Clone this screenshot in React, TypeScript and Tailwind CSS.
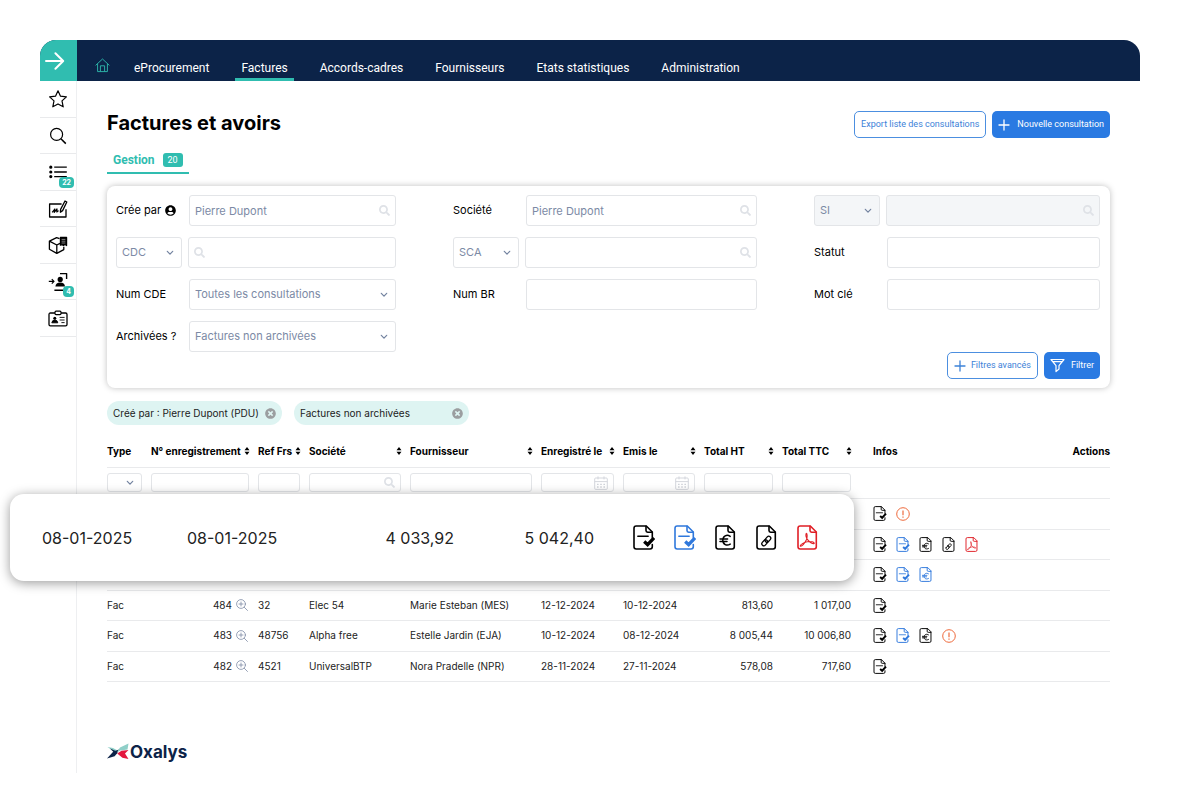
import type { ReactNode } from 'react';
import clsx from 'clsx';
import { FaSearch, FaTimesCircle, FaUserCircle } from 'react-icons/fa';

type DocKind = 'check' | 'euro' | 'link' | 'pdf';
type Info = { kind: DocKind | 'alert'; tone?: 'black' | 'blue' | 'red' | 'orange' };

interface Invoice {
  id: string;
  type?: string;
  ref?: string;
  company?: string;
  supplier?: string;
  registered?: string;
  issued?: string;
  net?: string;
  gross?: string;
  infos: Info[];
}

const invoices: Invoice[] = [
  { id: '487', infos: [{ kind: 'check' }, { kind: 'alert', tone: 'orange' }] },
  {
    id: '486',
    infos: [{ kind: 'check' }, { kind: 'check', tone: 'blue' }, { kind: 'euro' }, { kind: 'link' }, { kind: 'pdf', tone: 'red' }],
  },
  { id: '485', infos: [{ kind: 'check' }, { kind: 'check', tone: 'blue' }, { kind: 'euro', tone: 'blue' }] },
  {
    id: '484', type: 'Fac', ref: '32', company: 'Elec 54', supplier: 'Marie Esteban (MES)',
    registered: '12-12-2024', issued: '10-12-2024', net: '813,60', gross: '1 017,00',
    infos: [{ kind: 'check' }],
  },
  {
    id: '483', type: 'Fac', ref: '48756', company: 'Alpha free', supplier: 'Estelle Jardin (EJA)',
    registered: '10-12-2024', issued: '08-12-2024', net: '8 005,44', gross: '10 006,80',
    infos: [{ kind: 'check' }, { kind: 'check', tone: 'blue' }, { kind: 'euro' }, { kind: 'alert', tone: 'orange' }],
  },
  {
    id: '482', type: 'Fac', ref: '4521', company: 'UniversalBTP', supplier: 'Nora Pradelle (NPR)',
    registered: '28-11-2024', issued: '27-11-2024', net: '578,08', gross: '717,60',
    infos: [{ kind: 'check' }],
  },
];

const navItems = ['eProcurement', 'Factures', 'Accords-cadres', 'Fournisseurs', 'Etats statistiques', 'Administration'];

const toneClass = {
  black: 'text-black',
  blue: 'text-[#2f78dc]',
  red: 'text-[#e01f26]',
  orange: 'text-[#ee6a3c]',
};

/* ---------- icons ---------- */

function DocIcon({ kind, className }: { kind: DocKind; className?: string }) {
  return (
    <svg viewBox="0 0 22 25" fill="none" stroke="currentColor" strokeWidth="1.6" strokeLinejoin="round" strokeLinecap="round" className={className}>
      {kind === 'check' ? (
        <>
          <path d="M19.3 12.5V7L13.3 1H3.2Q1 1 1 3.2V21.8Q1 24 3.2 24H17Q19.3 24 19.3 21.8V19.5" />
          <path d="M4.8 11.3H15.2" strokeWidth="1.4" />
          <path d="M11.2 16.6L14.6 19.6L21 12.8" strokeWidth="3.3" strokeLinecap="butt" strokeLinejoin="miter" />
        </>
      ) : (
        <path d="M13.3 1H3.2Q1 1 1 3.2V21.8Q1 24 3.2 24H17.1Q19.3 24 19.3 21.8V7Z" />
      )}
      <path d="M13 1.2V5.6Q13 7.2 14.6 7.2H19.2" />
      {kind === 'euro' && (
        <path d="M15.2 11.4C11.8 9 7.8 11 7.8 15.2S11.8 21.3 15.2 19.1M5 13.9H12.6M5 16.4H12" strokeWidth="1.5" />
      )}
      {kind === 'link' && (
        <g transform="rotate(-48 10.3 16)" strokeWidth="1.3">
          <rect x="4.6" y="14" width="6.6" height="4" rx="2" />
          <rect x="9.4" y="14" width="6.6" height="4" rx="2" />
        </g>
      )}
      {kind === 'pdf' && (
        <path
          d="M9.2 8.4C8.4 10.4 9.6 13.4 11.2 15.4C12.8 17.4 15.8 19.2 17.2 18.5C17.6 17 13.2 16.1 10 16.8C6.8 17.4 3.2 19.6 3.2 21C4.8 22 8.2 17.5 9.4 14.8C10.3 12.6 10.6 8.6 9.2 8.4Z"
          strokeWidth="1.1"
        />
      )}
    </svg>
  );
}

function InfoIcon({ kind, tone = 'black' }: Info) {
  if (kind === 'alert') {
    return (
      <svg viewBox="0 0 14 14" fill="none" stroke="currentColor" className={clsx('size-[14px]', toneClass[tone])}>
        <circle cx="7" cy="7" r="6.3" />
        <path d="M7 3.4V8.2M7 9.6V10.8" strokeWidth="1.2" />
      </svg>
    );
  }
  return <DocIcon kind={kind} className={clsx('h-[15px] w-[14px]', toneClass[tone])} />;
}

function Chevron({ className }: { className?: string }) {
  return (
    <svg viewBox="0 0 8 6" fill="none" stroke="#7383a0" strokeWidth="1.2" strokeLinecap="round" strokeLinejoin="round" className={clsx('h-[6px] w-2', className)}>
      <path d="M1.3 1.3L4 4.2L6.7 1.3" />
    </svg>
  );
}

function SortIcon() {
  return (
    <svg viewBox="0 0 6 8" fill="currentColor" className="h-2 w-[6px]">
      <path d="M3 0L5.5 3.2H0.5ZM3 8L5.5 4.8H0.5Z" />
    </svg>
  );
}

function PlusIcon() {
  return (
    <svg viewBox="0 0 12 12" fill="none" stroke="currentColor" strokeWidth="1.3" strokeLinecap="round" className="size-3">
      <path d="M6 1V11M1 6H11" />
    </svg>
  );
}

function CalendarIcon({ className }: { className?: string }) {
  return (
    <svg viewBox="0 0 14 14" fill="none" stroke="#d0d3d9" strokeWidth="0.9" className={clsx('size-[14px]', className)}>
      <rect x="0.7" y="2" width="12.6" height="11.4" rx="1" />
      <path d="M0.7 5.6H13.3M4 0.4V3.4M10 0.4V3.4" />
      <path d="M3 8.4H4.6M6.2 8.4H7.8M9.4 8.4H11M3 11H4.6M6.2 11H7.8M9.4 11H11" strokeWidth="1.4" />
    </svg>
  );
}

function ZoomIcon() {
  return (
    <svg viewBox="0 0 12 12" fill="none" stroke="#7d8aa5" strokeWidth="0.8" strokeLinecap="round" className="size-3">
      <circle cx="5" cy="5" r="4.4" />
      <path d="M5 3V7M3 5H7M8.3 8.3L11.5 11.5" />
    </svg>
  );
}

function Svg({ children }: { children: ReactNode }) {
  return (
    <svg viewBox="0 0 20 20" fill="none" stroke="currentColor" strokeWidth="1.2" strokeLinejoin="round" className="size-5">
      {children}
    </svg>
  );
}

const sideItems: { label: string; badge?: string; icon: ReactNode }[] = [
  {
    label: 'Favoris',
    icon: <Svg><path d="M10 1.8L12.5 7.2L18.4 7.9L14 11.9L15.2 17.8L10 14.9L4.8 17.8L6 11.9L1.6 7.9L7.5 7.2Z" /></Svg>,
  },
  {
    label: 'Rechercher',
    icon: <Svg><circle cx="8.6" cy="8.4" r="6" /><path d="M12.9 12.8L17.8 17.6" strokeWidth="1.5" /></Svg>,
  },
  {
    label: 'Listes',
    badge: '22',
    icon: (
      <Svg>
        <path d="M6.2 5.2H18.8M6.2 10H18.8M6.2 14.6H18.8" strokeWidth="1.3" />
        <path d="M2.8 5.2H2.81M2.8 10H2.81M2.8 14.6H2.81" strokeWidth="3.2" strokeLinecap="round" />
      </Svg>
    ),
  },
  {
    label: 'Signatures',
    icon: (
      <Svg>
        <path d="M13.6 5H1.6V18H18V10.2" strokeWidth="1.3" />
        <path d="M4.2 13.4L6.8 10L6.2 13.4L9 10L8.8 13L10.6 11.6" strokeWidth="1.2" />
        <path d="M17 2L18.8 3L14.6 11.6L12.4 13.2L12.6 10.4Z" strokeWidth="1.3" />
      </Svg>
    ),
  },
  {
    label: 'Produits',
    icon: (
      <Svg>
        <path d="M11.5 3.6L8.6 2.6L1.4 6.2V14.2L8.8 18.4L15.8 14.6V11.8M1.4 6.2L8.8 10V18.4M8.8 10L12 8.4" strokeWidth="1.3" />
        <path d="M12.4 2.4H18.6V10.6L17 9.6L15.4 10.6L14 9.6L12.4 10.2Z" fill="currentColor" />
        <path d="M13.6 4.4H17.4M13.6 6.2H17.4M13.6 8H17.4" stroke="#fff" strokeWidth="0.5" />
      </Svg>
    ),
  },
  {
    label: 'Accès',
    badge: '4',
    icon: (
      <Svg>
        <path d="M12 1.6H18.6V7M6.4 18.2H15.4" strokeWidth="1.4" />
        <path d="M0.8 9.4H6M3.8 7.2L6 9.4L3.8 11.6" />
        <circle cx="12.2" cy="7.4" r="2.6" fill="currentColor" stroke="none" />
        <path d="M7.4 14.6Q7.8 10.6 12.2 10.6T17 14.6Z" fill="currentColor" stroke="none" />
      </Svg>
    ),
  },
  {
    label: 'Contacts',
    icon: (
      <Svg>
        <path d="M7 5H2.4Q1 5 1 6.4V16.4Q1 17.8 2.4 17.8H17.6Q19 17.8 19 16.4V6.4Q19 5 17.6 5H13" strokeWidth="1.3" />
        <rect x="7" y="3.2" width="6" height="3.4" rx="1" />
        <circle cx="6.8" cy="10.2" r="1.5" fill="currentColor" stroke="none" />
        <path d="M3.8 14.8Q4.2 12 6.8 12T9.8 14.8ZM11.6 9.4H16.6M11.6 12H16.6M13.4 14.6H16.6" fill="currentColor" strokeWidth="0.9" />
      </Svg>
    ),
  },
];

/* ---------- form controls ---------- */

const box = 'h-[31px] w-full rounded-[3px] border border-[#e3e5e8] px-[5px] text-[11px] text-[#7c8aa5] outline-none';

function TextBox({ id, label, value, search, disabled }: {
  id: string; label?: string; value?: string; search?: 'left' | 'right'; disabled?: boolean;
}) {
  return (
    <div className="relative min-w-0 flex-1">
      <input id={id} aria-label={label} defaultValue={value} disabled={disabled} className={clsx(box, disabled ? 'bg-[#f4f6f8]' : 'bg-white')} />
      {search && (
        <FaSearch className={clsx('absolute top-[10px] size-[11px] text-[#dfe2e7]', search === 'left' ? 'left-[6px]' : 'right-[6px]')} />
      )}
    </div>
  );
}

function SelectBox({ id, label, value, narrow, disabled }: {
  id: string; label?: string; value: string; narrow?: boolean; disabled?: boolean;
}) {
  return (
    <div className={clsx('relative', narrow ? 'w-[66px]' : 'min-w-0 flex-1')}>
      <select id={id} aria-label={label} disabled={disabled} className={clsx(box, 'appearance-none opacity-100', disabled ? 'bg-[#f4f6f8]' : 'bg-white')}>
        <option>{value}</option>
      </select>
      <Chevron className="pointer-events-none absolute top-[13px] right-2" />
    </div>
  );
}

function Field({ id, label, children }: { id: string; label: ReactNode; children: ReactNode }) {
  return (
    <div className="flex items-center">
      <label htmlFor={id} className="flex w-[73px] shrink-0 items-center gap-1 text-[11px] whitespace-nowrap text-black">{label}</label>
      {children}
    </div>
  );
}

function Chip({ children }: { children: string }) {
  return (
    <span className="flex h-6 w-[175px] items-center justify-between rounded-full bg-[#def4f2] px-[6px] text-[10px] text-[#222]">
      {children}
      <button type="button" aria-label="Retirer le filtre">
        <FaTimesCircle className="size-[11px] text-[#9b9ea0]" />
      </button>
    </span>
  );
}

const primaryBtn = 'flex h-[27px] items-center rounded-[5px] bg-[#2a7ae2] px-[6px] font-[Roboto,sans-serif] text-[9px] text-white';
const outlineBtn = 'flex h-[27px] items-center rounded-[5px] border border-[#4c8fe0] bg-white px-[6px] font-[Roboto,sans-serif] text-[9px] text-[#3d82d8]';

/* ---------- table ---------- */

const columns = [
  { label: 'Type', width: 'w-[44px]', sort: false, filter: 'select' },
  { label: 'N° enregistrement', width: 'w-[107px]', sort: true, filter: 'text' },
  { label: 'Ref Frs', width: 'w-[51px]', sort: true, filter: 'text' },
  { label: 'Société', width: 'w-[101px]', sort: true, filter: 'search' },
  { label: 'Fournisseur', width: 'w-[131px]', sort: true, filter: 'text' },
  { label: 'Enregistré le', width: 'w-[82px]', sort: true, filter: 'date' },
  { label: 'Emis le', width: 'w-[81px]', sort: true, filter: 'date' },
  { label: 'Total HT', width: 'w-[78px]', sort: true, filter: 'text' },
  { label: 'Total TTC', width: 'w-[78px]', sort: true, filter: 'text' },
];

const filterBox = 'block h-[19px] w-full rounded-[3px] border border-[#e3e5e8] bg-white text-[10px] outline-none';

function InvoiceTable() {
  return (
    <table className="w-full table-fixed text-left text-[10px] whitespace-nowrap text-[#222]">
      <thead>
        <tr className="h-[31px] border-b border-[#e9eaec] text-black">
          {columns.map(c => (
            <th key={c.label} className={clsx('p-0 font-bold', c.width)}>
              <div className="flex items-center justify-between pr-2">
                {c.label}
                {c.sort && <button type="button" aria-label={`Trier par ${c.label}`}><SortIcon /></button>}
              </div>
            </th>
          ))}
          <th className="p-0 pl-[13px] font-bold">Infos</th>
          <th className="w-[100px] p-0 text-right font-bold">Actions</th>
        </tr>
        <tr className="h-[31px] border-b border-[#e9eaec]">
          {columns.map(c => (
            <td key={c.label} className="p-0 pr-[9px]">
              <div className="relative">
                {c.filter === 'select' ? (
                  <>
                    <select aria-label={c.label} className={clsx(filterBox, 'appearance-none')}><option /></select>
                    <Chevron className="pointer-events-none absolute top-[7px] right-2" />
                  </>
                ) : (
                  <input aria-label={`Filtrer ${c.label}`} className={filterBox} />
                )}
                {c.filter === 'search' && <FaSearch className="absolute top-1 right-[6px] size-[11px] text-[#dfe2e7]" />}
                {c.filter === 'date' && <CalendarIcon className="absolute top-[3px] right-[6px]" />}
              </div>
            </td>
          ))}
          <td colSpan={2} />
        </tr>
      </thead>
      <tbody>
        {invoices.map(inv => (
          <tr key={inv.id} className="h-[31px] border-b border-[#e9eaec] even:h-[30px]">
            <td className="p-0">{inv.type}</td>
            <td className="p-0 pr-[10px]">
              {inv.type && (
                <div className="flex items-center justify-end gap-1">
                  {inv.id}
                  <button type="button" aria-label={`Voir ${inv.id}`}><ZoomIcon /></button>
                </div>
              )}
            </td>
            <td className="p-0">{inv.ref}</td>
            <td className="p-0">{inv.company}</td>
            <td className="p-0">{inv.supplier}</td>
            <td className="p-0">{inv.registered}</td>
            <td className="p-0">{inv.issued}</td>
            <td className="p-0 pr-[9px] text-right">{inv.net}</td>
            <td className="p-0 pr-[9px] text-right">{inv.gross}</td>
            <td className="p-0 pl-[13px]">
              <div className="flex items-center gap-[9px]">
                {inv.infos.map((info, i) => <InfoIcon key={i} {...info} />)}
              </div>
            </td>
            <td />
          </tr>
        ))}
      </tbody>
    </table>
  );
}

// Enlarged copy of one row, floating over the table
function RowHighlight() {
  return (
    <div className="absolute top-[58px] -left-[97px] flex h-[87px] w-[844px] items-center rounded-[14px] bg-white pl-8 text-base text-[#222] shadow-[0_2px_12px_rgba(0,0,0,0.4)]">
      <span className="w-[145px]">08-01-2025</span>
      <span className="w-[145px]">08-01-2025</span>
      <span className="w-[122px] text-right">4 033,92</span>
      <span className="w-[140px] text-right">5 042,40</span>
      <div className="ml-[39px] flex gap-[19px]">
        <DocIcon kind="check" className="h-[25px] w-[22px] text-black" />
        <DocIcon kind="check" className="h-[25px] w-[22px] text-[#2f78dc]" />
        <DocIcon kind="euro" className="h-[25px] w-[22px] text-black" />
        <DocIcon kind="link" className="h-[25px] w-[22px] text-black" />
        <DocIcon kind="pdf" className="h-[25px] w-[22px] text-[#e01f26]" />
      </div>
    </div>
  );
}

function Logo() {
  return (
    <div className="flex items-center gap-px text-[#0c2348]">
      <svg viewBox="0 0 22 17" className="h-[17px] w-[22px]">
        <path d="M0.5 4L6 5L11.5 8L8 9.5Z" fill="#8fcfc8" />
        <path d="M3 5.6L10.5 8.8L7 9.4Z" fill="#0c2348" />
        <path d="M0 15.5L6.4 8.6L12 6.4L10 10.6L7.6 13.2Z" fill="#0c2348" />
        <path d="M21.5 0.5L13 4.6L10 9L13.4 7.6L20.5 6.6Z" fill="#8fcfc8" />
        <path d="M10.2 10.4L14.5 7.8L21.5 7L18 10.4L21.5 16L15.4 14.8Z" fill="#e3173e" />
      </svg>
      <span className="text-[17px] leading-5 font-bold">Oxalys</span>
    </div>
  );
}

export default function App() {
  return (
    <div className="bg-white px-10 pt-10 pb-4 font-[Inter,sans-serif]">
      <header className="flex h-[41px] overflow-hidden rounded-t-[16px] bg-[#0c2348]">
        <button type="button" aria-label="Ouvrir le menu" className="flex w-[37px] items-center bg-[#30bdb0] pl-[5px] text-white">
          <svg viewBox="0 0 20 20" fill="none" stroke="currentColor" strokeWidth="2" strokeLinecap="round" strokeLinejoin="round" className="size-5">
            <path d="M1 10H18M10.4 2.2L18.2 10L10.4 17.8" />
          </svg>
        </button>
        <nav className="flex items-end pl-[18px] font-[Roboto,sans-serif] text-xs leading-4 text-white">
          <a href="#accueil" aria-label="Accueil" className="mr-[18px] pb-2 text-[#30bdb0]">
            <svg viewBox="0 0 15 15" fill="none" stroke="currentColor" strokeWidth="0.9" className="size-[15px]">
              <path d="M0.6 7.4L7.5 1L14.4 7.4M2.6 5.8V13.6H12.4V5.8M5.4 13.4V7.8H9.6V13.4" />
            </svg>
          </a>
          <div className="flex gap-5">
            {navItems.map(item => (
              <a
                key={item}
                href={`#${item}`}
                className={clsx('border-b-[3px] px-[6px] pb-[2px]', item === 'Factures' ? 'border-[#30bdb0]' : 'border-transparent')}
              >
                {item}
              </a>
            ))}
          </div>
        </nav>
      </header>

      <div className="flex">
        <aside className="w-[37px] shrink-0 border-r border-[#eeeff1]">
          {sideItems.map(item => (
            <a
              key={item.label}
              href={`#${item.label}`}
              aria-label={item.label}
              className="relative flex h-[37px] items-center justify-center border-b border-[#e9eaec] text-black even:h-[36px]"
            >
              {item.icon}
              {item.badge && (
                <span className="absolute right-[2px] bottom-[2px] rounded-[4px] bg-[#30bdb0] px-[3px] text-[7px] leading-[11px] font-bold text-white">
                  {item.badge}
                </span>
              )}
            </a>
          ))}
        </aside>

        <main className="min-w-0 flex-1 px-[30px] pt-[30px] pb-[11px]">
          <div className="flex h-[27px] items-start gap-[6px]">
            <h1 className="mr-auto text-xl leading-6 font-bold text-black">Factures et avoirs</h1>
            <button type="button" className={outlineBtn}>Export liste des consultations</button>
            <button type="button" className={clsx(primaryBtn, 'gap-[7px]')}><PlusIcon />Nouvelle consultation</button>
          </div>

          <div className="mt-[10px] flex">
            <button type="button" className="flex h-[26px] items-center gap-2 border-b-2 border-[#30bdb0] px-[6px] font-[Roboto,sans-serif] text-xs font-bold text-[#30bdb0]">
              Gestion
              <span className="rounded-[3px] bg-[#30bdb0] px-[5px] text-[9px] leading-[14px] font-normal text-white">20</span>
            </button>
          </div>

          <form className="mt-3 rounded-lg bg-white py-[9px] pr-[10px] pl-[9px] shadow-[0_0_6px_rgba(0,0,0,0.25)]">
            <div className="grid grid-cols-[280fr_304fr_286fr] gap-x-[57px] gap-y-[11px]">
              <Field id="createdBy" label={<>Crée par <FaUserCircle className="size-[11px]" /></>}>
                <TextBox id="createdBy" value="Pierre Dupont" search="right" />
              </Field>
              <Field id="company" label="Société">
                <TextBox id="company" value="Pierre Dupont" search="right" />
              </Field>
              <div className="flex gap-[6px]">
                <SelectBox id="siType" label="SI" value="SI" narrow disabled />
                <TextBox id="si" label="Valeur SI" search="right" disabled />
              </div>

              <div className="flex gap-[6px]">
                <SelectBox id="cdcType" label="CDC" value="CDC" narrow />
                <TextBox id="cdc" label="Valeur CDC" search="left" />
              </div>
              <div className="flex gap-[6px]">
                <SelectBox id="scaType" label="SCA" value="SCA" narrow />
                <TextBox id="sca" label="Valeur SCA" search="right" />
              </div>
              <Field id="status" label="Statut"><TextBox id="status" /></Field>

              <Field id="order" label="Num CDE"><SelectBox id="order" value="Toutes les consultations" /></Field>
              <Field id="receipt" label="Num BR"><TextBox id="receipt" /></Field>
              <Field id="keyword" label="Mot clé"><TextBox id="keyword" /></Field>

              <Field id="archived" label="Archivées ?"><SelectBox id="archived" value="Factures non archivées" /></Field>
            </div>
            <div className="flex justify-end gap-[6px]">
              <button type="button" className={clsx(outlineBtn, 'gap-[5px]')}><PlusIcon />Filtres avancés</button>
              <button type="button" className={clsx(primaryBtn, 'gap-[6px]')}>
                <svg viewBox="0 0 15 15" fill="none" stroke="currentColor" strokeWidth="1.2" strokeLinejoin="round" className="size-[15px]">
                  <path d="M1 1.5H14L9 7.6V11L6 13.6V7.6ZM2.6 3.6H12.2" />
                </svg>
                Filtrer
              </button>
            </div>
          </form>

          <div className="mt-[13px] flex gap-3">
            <Chip>Créé par : Pierre Dupont (PDU)</Chip>
            <Chip>Factures non archivées</Chip>
          </div>

          <div className="relative mt-[11px]">
            <InvoiceTable />
            <RowHighlight />
          </div>

          <footer className="mt-[60px]">
            <Logo />
          </footer>
        </main>
      </div>
    </div>
  );
}
